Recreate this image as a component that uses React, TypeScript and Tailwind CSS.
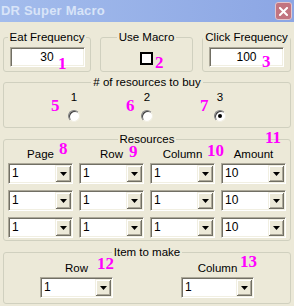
import React from "react";

const Combo = ({ value, width = "w-[65px]" }: { value: string; width?: string }) => (
  <div
    className={`${width} h-[21px] flex border-t border-l border-t-[#ACA899] border-l-[#ACA899] border-b border-r border-b-white border-r-white`}
  >
    <div className="flex flex-1 shadow-[inset_1px_1px_0_#716F64,inset_-1px_-1px_0_#F1EFE2] p-[1px]">
      <div className="flex-1 bg-white pl-[2px] text-[12px] leading-[17px] text-black">{value}</div>
      <div className="w-[16px] bg-[#ECE9D8] flex items-center justify-center shadow-[inset_1px_1px_0_#F1EFE2,inset_-1px_-1px_0_#716F64,inset_2px_2px_0_#FFFFFF,inset_-2px_-2px_0_#ACA899]">
        <svg width="7" height="4" viewBox="0 0 7 4">
          <polygon points="0,0 7,0 3.5,4" fill="#000" />
        </svg>
      </div>
    </div>
  </div>
);

const TextBox = ({ value }: { value: string }) => (
  <div className="mx-auto w-[75px] h-[20px] border-t border-l border-t-[#ACA899] border-l-[#ACA899] border-b border-r border-b-white border-r-white">
    <div className="h-full bg-white shadow-[inset_1px_1px_0_#716F64,inset_-1px_-1px_0_#F1EFE2] text-center text-[12px] leading-[18px] text-black">
      {value}
    </div>
  </div>
);

const Radio = ({ label, checked = false }: { label: string; checked?: boolean }) => (
  <div className="w-[12px] flex flex-col items-center">
    <span className="text-[11.5px] leading-[13px]">{label}</span>
    <div className="mt-[6px] w-[12px] h-[12px] rounded-full bg-white border border-t-[#808080] border-l-[#808080] border-b-[#F1EFE2] border-r-[#F1EFE2] shadow-[inset_1px_1px_0_#404040] flex items-center justify-center">
      {checked && <div className="w-[4px] h-[4px] rounded-full bg-black" />}
    </div>
  </div>
);

const Mark = ({ n, className }: { n: string; className: string }) => (
  <span
    className={`absolute text-[17px] leading-none font-bold text-[#FF00FF] ${className}`}
    style={{ fontFamily: '"Liberation Serif", serif' }}
  >
    {n}
  </span>
);

const group = "border border-[#D0D0BF] rounded-[3px] min-w-0";
const legend = "mx-auto px-[2px] text-[11.5px] leading-[13px] whitespace-nowrap";
const label = "text-[11.5px] leading-[13px] whitespace-nowrap";

export default function App() {
  return (
    <div
      className="relative w-[294px] h-[306px] bg-[#ECE9D8] text-black overflow-hidden"
      style={{ fontFamily: '"Liberation Sans", Arial, sans-serif' }}
    >
      <div className="h-[22px] flex items-center justify-between bg-gradient-to-r from-[#A3BCEC] to-[#8CA6E4] pl-[1px] pr-[2px]">
        <span className="text-[13px] font-bold text-[#D8E4F8] tracking-[0.2px]">DR Super Macro</span>
        <div className="w-[17px] h-[18px] rounded-[3px] bg-[#C27480] border border-[#E3C5CC] flex items-center justify-center">
          <svg width="9" height="9" viewBox="0 0 9 9">
            <path d="M1 1 L8 8 M8 1 L1 8" stroke="#FFFFFF" strokeWidth="2" strokeLinecap="square" />
          </svg>
        </div>
      </div>

      <div className="px-[3px] pt-[9px] flex flex-col">
        <div className="flex gap-[9px]">
          <fieldset className={`${group} w-[88px] h-[41px] pt-[3px]`}>
            <legend className={legend}>Eat Frequency</legend>
            <TextBox value="30" />
          </fieldset>
          <fieldset className={`${group} w-[93px] h-[41px] pt-[8px]`}>
            <legend className={legend}>Use Macro</legend>
            <div className="mx-auto w-[13px] h-[13px] border-2 border-black bg-white" />
          </fieldset>
          <fieldset className={`${group} w-[89px] h-[41px] pt-[3px]`}>
            <legend className={legend}>Click Frequency</legend>
            <TextBox value="100" />
          </fieldset>
        </div>

        <fieldset className={`${group} mt-[4px] h-[52px] pt-[2px]`}>
          <legend className={legend}># of resources to buy</legend>
          <div className="flex justify-center gap-[61px]">
            <Radio label="1" />
            <Radio label="2" />
            <Radio label="3" checked />
          </div>
        </fieldset>

        <fieldset className={`${group} mt-[5px] h-[108px] pt-[2px]`}>
          <legend className={legend}>Resources</legend>
          <div className="mx-auto w-[278px] grid grid-cols-4 gap-x-[6px] gap-y-[6px]">
            {["Page", "Row", "Column", "Amount"].map((h) => (
              <div key={h} className={`${label} text-center -mb-[4px]`}>
                {h}
              </div>
            ))}
            {[0, 1, 2].map((r) => (
              <React.Fragment key={r}>
                <Combo value="1" />
                <Combo value="1" />
                <Combo value="1" />
                <Combo value="10" />
              </React.Fragment>
            ))}
          </div>
        </fieldset>

        <fieldset className={`${group} mt-[5px] h-[58px] pt-[3px]`}>
          <legend className={legend}>Item to make</legend>
          <div className="flex justify-center gap-[68px]">
            <div className="flex flex-col items-center gap-[2px]">
              <span className={label}>Row</span>
              <Combo value="1" width="w-[73px]" />
            </div>
            <div className="flex flex-col items-center gap-[2px]">
              <span className={label}>Column</span>
              <Combo value="1" width="w-[73px]" />
            </div>
          </div>
        </fieldset>
      </div>

      <Mark n="1" className="left-[58px] top-[55px]" />
      <Mark n="2" className="left-[155px] top-[54px]" />
      <Mark n="3" className="left-[262px] top-[53px]" />
      <Mark n="5" className="left-[51px] top-[97px]" />
      <Mark n="6" className="left-[126px] top-[97px]" />
      <Mark n="7" className="left-[200px] top-[97px]" />
      <Mark n="8" className="left-[59px] top-[140px]" />
      <Mark n="9" className="left-[129px] top-[143px]" />
      <Mark n="10" className="left-[207px] top-[142px]" />
      <Mark n="11" className="left-[265px] top-[129px]" />
      <Mark n="12" className="left-[97px] top-[255px]" />
      <Mark n="13" className="left-[240px] top-[253px]" />
    </div>
  );
}
